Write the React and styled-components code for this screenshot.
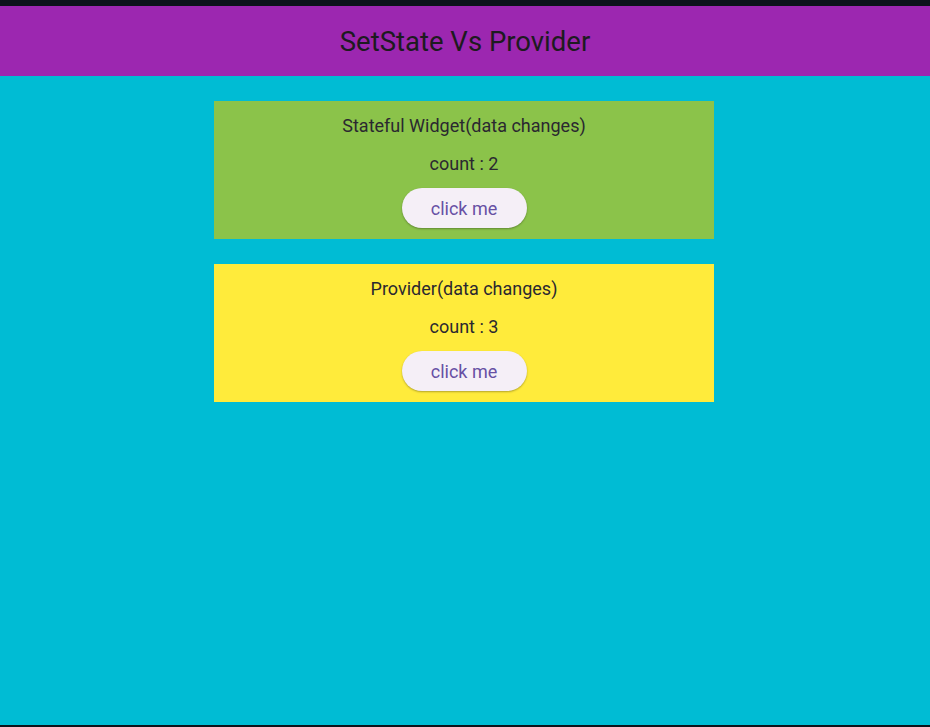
import React, { useState } from "react";
import styled, { createGlobalStyle } from "styled-components";

const GlobalStyle = createGlobalStyle`
  html, body {
    margin: 0;
    padding: 0;
    height: 100%;
  }
  body {
    font-family: Roboto, "Noto Sans", sans-serif;
    background: #0d131b;
  }
  #root {
    height: 100%;
  }
`;

const Screen = styled.div`
  height: 100%;
  box-sizing: border-box;
  padding: 6px 0 2px;
  display: flex;
  flex-direction: column;
`;

const AppBar = styled.header`
  height: 70px;
  flex-shrink: 0;
  background: #9c27b0;
  display: flex;
  align-items: center;
  justify-content: center;

  h1 {
    margin: 0;
    font-size: 27.5px;
    font-weight: 400;
    color: #1d1b20;
  }
`;

const Body = styled.main`
  flex: 1;
  background: #00bcd4;
  display: flex;
  flex-direction: column;
  align-items: center;
  padding: 25px 2px 0 0;
  row-gap: 25px;
`;

const Card = styled.section`
  width: 500px;
  height: 138px;
  box-sizing: border-box;
  background: ${(p) => p.$color};
  display: flex;
  flex-direction: column;
  align-items: center;
  padding-top: 14px;
  color: #1d1b20;

  p {
    margin: 0;
    font-size: 18px;
    line-height: 22px;
    color: #2a2830;
  }

  .count {
    margin-top: 16px;
  }
`;

const PillButton = styled.button`
  margin-top: 13px;
  width: 125px;
  height: 40px;
  border: none;
  border-radius: 20px;
  background: #f5eff7;
  color: #6750a4;
  font-family: Roboto, "Noto Sans", sans-serif;
  font-size: 18px;
  cursor: pointer;
  box-shadow: 0 1px 2px rgba(0, 0, 0, 0.3);
`;

const CounterCard = ({ title, color, start }) => {
  const [count, setCount] = useState(start);
  return (
    <Card $color={color}>
      <p>{title}</p>
      <p className="count">count : {count}</p>
      <PillButton onClick={() => setCount(count + 1)}>click me</PillButton>
    </Card>
  );
};

const App = () => {
  return (
    <>
      <GlobalStyle />
      <Screen>
        <AppBar>
          <h1>SetState Vs Provider</h1>
        </AppBar>
        <Body>
          <CounterCard title="Stateful Widget(data changes)" color="#8bc34a" start={2} />
          <CounterCard title="Provider(data changes)" color="#ffeb3b" start={3} />
        </Body>
      </Screen>
    </>
  );
};

export default App;
